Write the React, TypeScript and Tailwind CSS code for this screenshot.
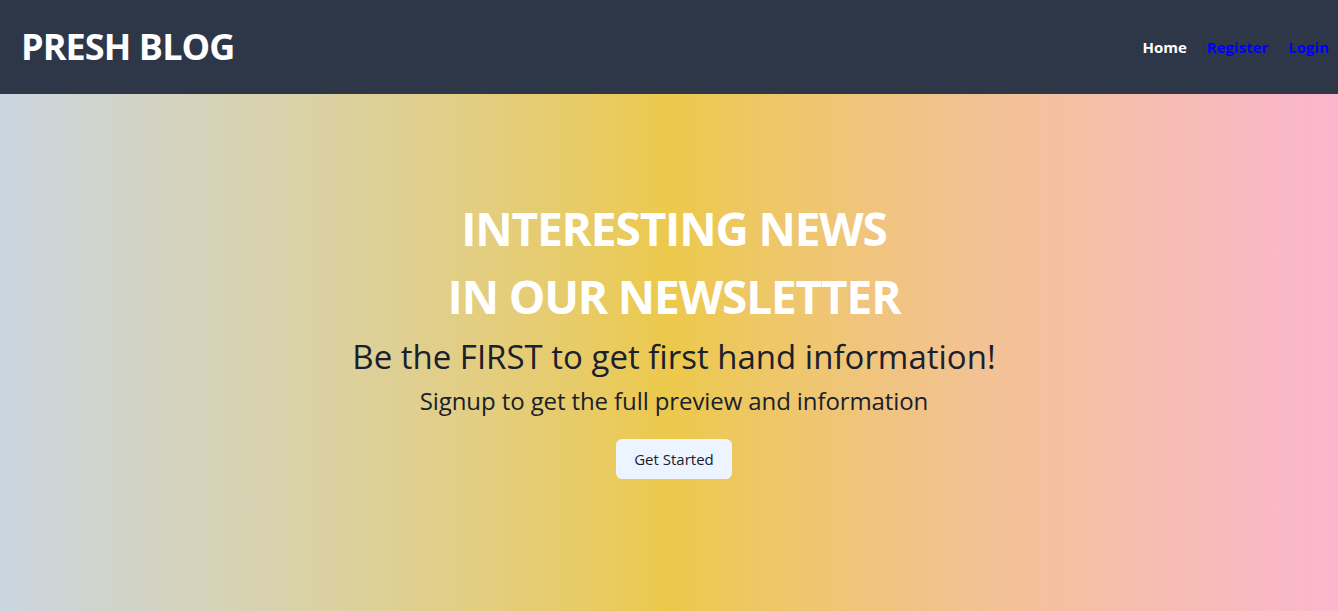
import React from 'react';

const font = { fontFamily: '"Open Sans", "Noto Sans", sans-serif' };

export default function App() {
  return (
    <div className="w-full min-h-[611px] flex flex-col" style={font}>
      {/* Navbar */}
      <nav className="h-[94px] bg-[#2d3748] flex items-center justify-between pl-[21px] pr-[9px]">
        <h1 className="text-[36px] font-bold text-white tracking-tight">PRESH BLOG</h1>
        <ul className="flex items-center gap-5 text-[15px] font-bold">
          <li className="text-white">Home</li>
          <li className="text-[#0000ff]">Register</li>
          <li className="text-[#0000ff]">Login</li>
        </ul>
      </nav>

      {/* Hero */}
      <section className="flex-1 h-[517px] bg-gradient-to-r from-[#cbd5e0] via-[#ecc94b] to-[#fbb6ce] flex flex-col items-center pt-[100px] pl-[10px]">
        <h2 className="text-[46px] font-bold text-white leading-[68px] text-center tracking-tight">
          INTERESTING NEWS
          <br />
          IN OUR NEWSLETTER
        </h2>
        <p className="text-[33px] text-[#1a202c] leading-tight mt-[6px]">
          Be the FIRST to get first hand information!
        </p>
        <p className="text-[24px] text-[#1a202c] mt-[6px] tracking-[-0.1px]">Signup to get the full preview and information</p>
        <button className="mt-[20px] bg-[#ebf4ff] text-[#1a202c] text-[15px] rounded-md px-[18px] h-[40px]">
          Get Started
        </button>
      </section>
    </div>
  );
}
